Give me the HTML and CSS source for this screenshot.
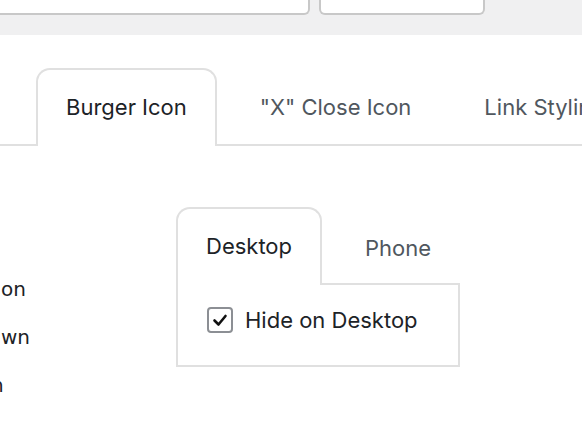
FILE: index.html
```html
<!DOCTYPE html>
<html>
<head>
<meta charset="utf-8">
<link rel="stylesheet" href="styles.css">
</head>
<body>
<div class="topbar">
  <div class="field field-wide"></div>
  <div class="field field-narrow"></div>
</div>
<nav class="tabs main-tabs">
  <ul class="tab-list">
    <li class="tab active">Burger Icon</li>
    <li class="tab">"X" Close Icon</li>
    <li class="tab">Link Styling</li>
  </ul>
</nav>
<div class="content">
  <div class="labels">
    <div class="label">on</div>
    <div class="label">wn</div>
    <div class="label cut">n</div>
  </div>
  <div class="sub">
    <ul class="tab-list">
      <li class="tab active">Desktop</li>
      <li class="tab">Phone</li>
    </ul>
    <div class="panel">
      <label class="check-row">
        <span class="checkbox">
          <svg width="22" height="22" viewBox="0 0 22 22"><path d="M5.5 11.5 L9.5 15.5 L16.5 7" fill="none" stroke="#111" stroke-width="2.6" stroke-linecap="round" stroke-linejoin="round"/></svg>
        </span>
        <span class="check-text">Hide on Desktop</span>
      </label>
    </div>
  </div>
</div>
</body>
</html>
```
FILE: styles.css
```css
html, body {
  margin: 0;
  padding: 0;
  background: #fff;
  overflow: hidden;
  width: 582px;
  height: 432px;
}
body {
  font-family: Inter, "Noto Sans", sans-serif;
  color: #1d2327;
}
.topbar {
  height: 35px;
  background: #f0f0f1;
  display: flex;
  gap: 9px;
  overflow: hidden;
}
.field {
  background: #fff;
  border: 2px solid #c8c8c8;
  border-top: none;
  border-radius: 0 0 6px 6px;
  height: 13px;
  flex: none;
}
.field-wide {
  width: 316px;
  margin-left: -10px;
}
.field-narrow {
  width: 162px;
}
.main-tabs {
  padding-top: 33px;
}
.tab-list {
  list-style: none;
  margin: 0;
  padding: 0;
  display: flex;
  gap: 13px;
  border-bottom: 2px solid #e0e0e0;
  white-space: nowrap;
}
.main-tabs .tab-list {
  padding-left: 36px;
}
.tab {
  flex: none;
  height: 76px;
  box-sizing: border-box;
  padding: 22px 28px 0;
  font-size: 22px;
  line-height: 30px;
  color: #50575e;
  border: 2px solid transparent;
  border-bottom: none;
  border-radius: 14px 14px 0 0;
}
.tab.active {
  color: #1d2327;
  border-color: #e0e0e0;
  background: #fff;
  height: 78px;
  margin-bottom: -2px;
}
.content {
  display: flex;
}
.labels {
  flex: 0 0 176px;
  padding-top: 119px;
  font-family: "DejaVu Sans", sans-serif;
  font-size: 20px;
  line-height: 48px;
  color: #1d2327;
}
.label {
  margin-left: 1px;
}
.label.cut {
  margin-left: -9px;
}
.sub {
  width: 284px;
  margin-top: 61px;
}
.sub .tab:last-child {
  padding-top: 24px;
}
.panel {
  border: 2px solid #e0e0e0;
  border-top: none;
  padding: 22px 29px 32px;
}
.check-row {
  display: flex;
  align-items: center;
  gap: 12px;
  height: 26px;
}
.checkbox {
  width: 26px;
  height: 26px;
  box-sizing: border-box;
  border: 2px solid #8c8f94;
  border-radius: 4px;
  display: flex;
  align-items: center;
  justify-content: center;
}
.check-text {
  font-size: 22px;
  line-height: 26px;
  color: #1d2327;
}
```
